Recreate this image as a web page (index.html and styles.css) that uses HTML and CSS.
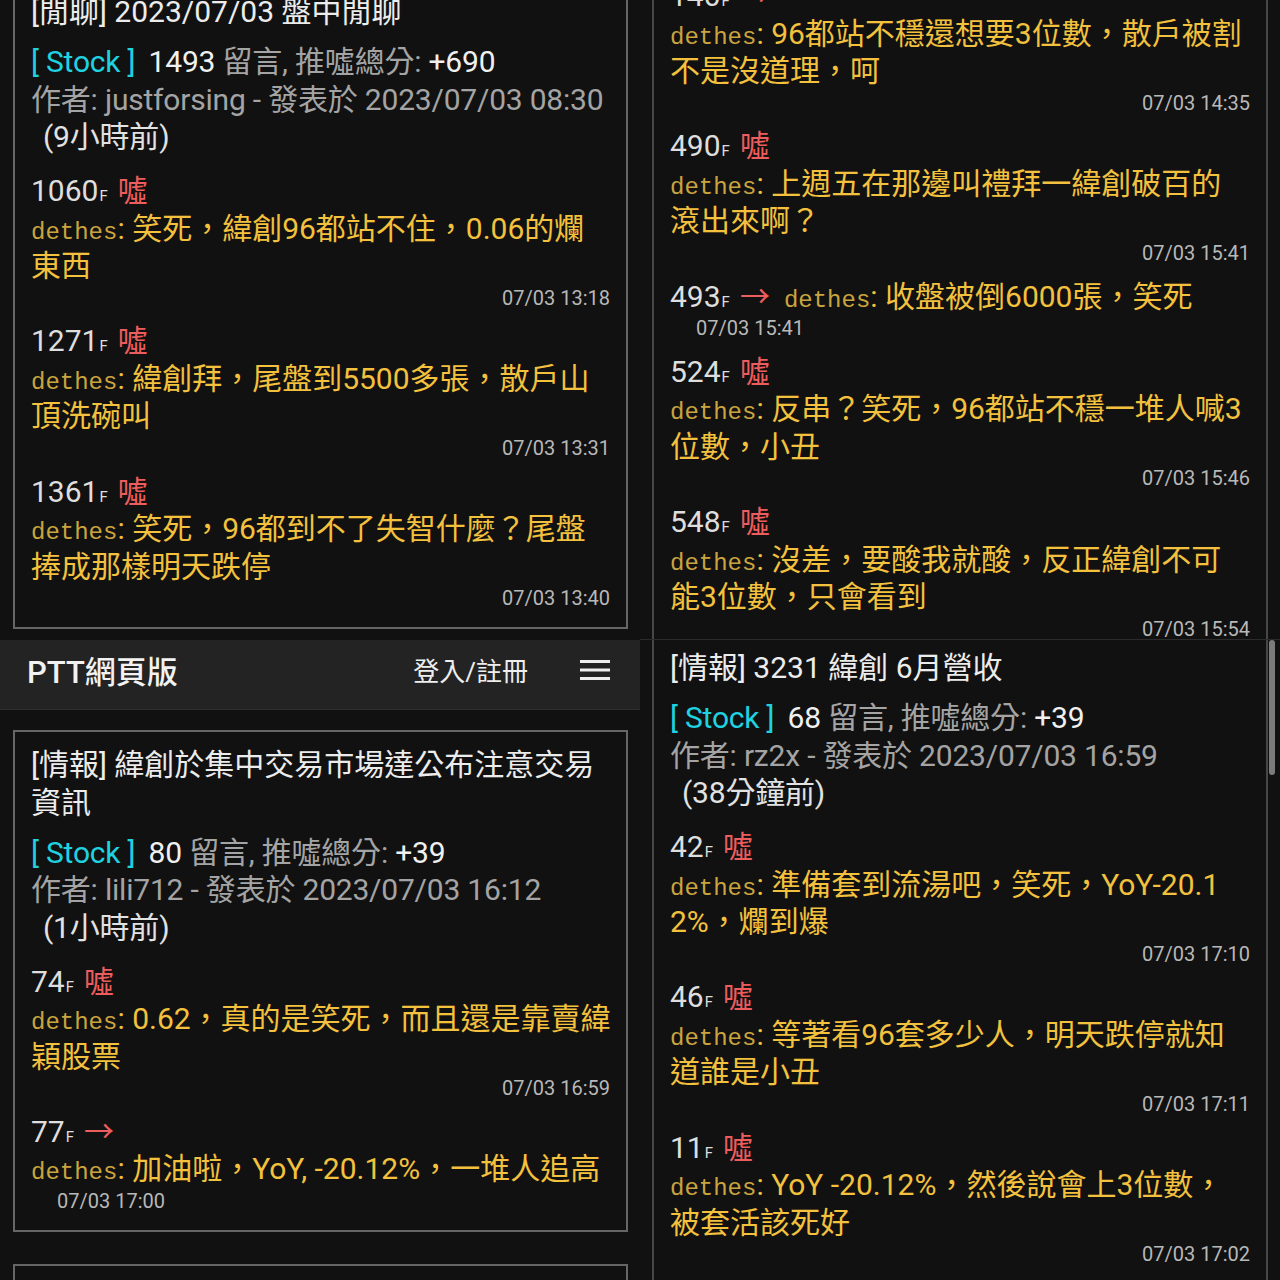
FILE: index.html
```html
<!DOCTYPE html>
<html lang="zh-Hant">

<head>
    <meta charset="UTF-8">
    <meta name="viewport" content="width=device-width, initial-scale=1.0">
    <title>PTT網頁版 - 緯創</title>
    <link rel="stylesheet" href="styles.css">
</head>

<body>
    <div class="screen">

        <!-- top left -->
        <section class="panel panel-tl">
            <article class="post post-first">
                <h2 class="post-title">[閒聊] 2023/07/03 盤中閒聊</h2>
                <div class="post-meta">
                    <div><span class="board">[ Stock ]</span> <span class="num">1493</span> 留言, 推噓總分: <span class="num">+690</span></div>
                    <div>作者: justforsing - 發表於 2023/07/03 08:30</div>
                    <div class="ago">(9小時前)</div>
                </div>
                <div class="comment">
                    <div class="floor">1060<small>F</small><span class="tag">噓</span></div>
                    <div class="cmt-text"><span class="uid">dethes</span>: 笑死，緯創96都站不住，0.06的爛<br>東西</div>
                    <div class="cmt-time">07/03 13:18</div>
                </div>
                <div class="comment">
                    <div class="floor">1271<small>F</small><span class="tag">噓</span></div>
                    <div class="cmt-text"><span class="uid">dethes</span>: 緯創拜，尾盤到5500多張，散戶山<br>頂洗碗叫</div>
                    <div class="cmt-time">07/03 13:31</div>
                </div>
                <div class="comment">
                    <div class="floor">1361<small>F</small><span class="tag">噓</span></div>
                    <div class="cmt-text"><span class="uid">dethes</span>: 笑死，96都到不了失智什麼？尾盤<br>捧成那樣明天跌停</div>
                    <div class="cmt-time">07/03 13:40</div>
                </div>
            </article>
        </section>

        <!-- top right -->
        <section class="panel panel-r panel-tr">
            <article class="post post-mid">
                <div class="comment">
                    <div class="floor">140<small>F</small><span class="tag">→</span></div>
                    <div class="cmt-text"><span class="uid">dethes</span>: 96都站不穩還想要3位數，散戶被割<br>不是沒道理，呵</div>
                    <div class="cmt-time">07/03 14:35</div>
                </div>
                <div class="comment">
                    <div class="floor">490<small>F</small><span class="tag">噓</span></div>
                    <div class="cmt-text"><span class="uid">dethes</span>: 上週五在那邊叫禮拜一緯創破百的<br>滾出來啊？</div>
                    <div class="cmt-time">07/03 15:41</div>
                </div>
                <div class="comment">
                    <div class="floor">493<small>F</small><span class="tag">→</span><span class="cmt-inline"><span class="uid">dethes</span>: 收盤被倒6000張，笑死</span></div>
                    <div class="cmt-time left">07/03 15:41</div>
                </div>
                <div class="comment">
                    <div class="floor">524<small>F</small><span class="tag">噓</span></div>
                    <div class="cmt-text"><span class="uid">dethes</span>: 反串？笑死，96都站不穩一堆人喊3<br>位數，小丑</div>
                    <div class="cmt-time">07/03 15:46</div>
                </div>
                <div class="comment">
                    <div class="floor">548<small>F</small><span class="tag">噓</span></div>
                    <div class="cmt-text"><span class="uid">dethes</span>: 沒差，要酸我就酸，反正緯創不可<br>能3位數，只會看到</div>
                    <div class="cmt-time">07/03 15:54</div>
                </div>
            </article>
        </section>

        <!-- bottom left -->
        <section class="panel panel-bl">
            <header class="topbar">
                <div class="brand">PTT網頁版</div>
                <div class="login">登入/註冊</div>
                <svg class="menu" width="30" height="20" viewBox="0 0 30 20">
                    <rect x="0" y="0" width="30" height="3" fill="#eee"/>
                    <rect x="0" y="8.5" width="30" height="3" fill="#eee"/>
                    <rect x="0" y="17" width="30" height="3" fill="#eee"/>
                </svg>
            </header>
            <article class="post">
                <h2 class="post-title">[情報] 緯創於集中交易市場達公布注意交易<br>資訊</h2>
                <div class="post-meta">
                    <div><span class="board">[ Stock ]</span> <span class="num">80</span> 留言, 推噓總分: <span class="num">+39</span></div>
                    <div>作者: lili712 - 發表於 2023/07/03 16:12</div>
                    <div class="ago">(1小時前)</div>
                </div>
                <div class="comment">
                    <div class="floor">74<small>F</small><span class="tag">噓</span></div>
                    <div class="cmt-text"><span class="uid">dethes</span>: 0.62，真的是笑死，而且還是靠賣緯<br>穎股票</div>
                    <div class="cmt-time">07/03 16:59</div>
                </div>
                <div class="comment">
                    <div class="floor">77<small>F</small><span class="tag">→</span></div>
                    <div class="cmt-text"><span class="uid">dethes</span>: 加油啦，YoY, -20.12%，一堆人追高</div>
                    <div class="cmt-time left">07/03 17:00</div>
                </div>
            </article>
            <article class="post post-next"></article>
        </section>

        <!-- bottom right -->
        <section class="panel panel-r panel-br">
            <div class="scrollbar"></div>
            <article class="post post-top">
                <h2 class="post-title">[情報] 3231 緯創 6月營收</h2>
                <div class="post-meta">
                    <div><span class="board">[ Stock ]</span> <span class="num">68</span> 留言, 推噓總分: <span class="num">+39</span></div>
                    <div>作者: rz2x - 發表於 2023/07/03 16:59</div>
                    <div class="ago">(38分鐘前)</div>
                </div>
                <div class="comment">
                    <div class="floor">42<small>F</small><span class="tag">噓</span></div>
                    <div class="cmt-text"><span class="uid">dethes</span>: 準備套到流湯吧，笑死，YoY-20.1<br>2%，爛到爆</div>
                    <div class="cmt-time">07/03 17:10</div>
                </div>
                <div class="comment">
                    <div class="floor">46<small>F</small><span class="tag">噓</span></div>
                    <div class="cmt-text"><span class="uid">dethes</span>: 等著看96套多少人，明天跌停就知<br>道誰是小丑</div>
                    <div class="cmt-time">07/03 17:11</div>
                </div>
                <div class="comment">
                    <div class="floor">11<small>F</small><span class="tag">噓</span></div>
                    <div class="cmt-text"><span class="uid">dethes</span>: YoY -20.12%，然後說會上3位數，<br>被套活該死好</div>
                    <div class="cmt-time">07/03 17:02</div>
                </div>
            </article>
        </section>

    </div>
</body>

</html>
```

FILE: styles.css
```css
* {
    box-sizing: border-box;
}

body {
    margin: 0;
    background-color: #111;
    font-family: Roboto, "Noto Sans CJK TC", sans-serif;
    color: #eee;
}

.screen {
    width: 1280px;
    height: 1280px;
    display: grid;
    grid-template-columns: 640px 640px;
    grid-template-rows: 640px 640px;
    overflow: hidden;
}

.panel {
    position: relative;
    overflow: hidden;
}

.panel-tr {
    border-bottom: 1px solid #2c2c2c;
}

/* article card */
.post {
    border: 2px solid #666;
    margin-left: 13px;
    margin-right: 12px;
    padding: 14px 16px 4px 16px;
    font-size: 30px;
    line-height: 37.5px;
}

.panel-r .post {
    border-color: #474747;
    margin-left: 12px;
}

.post-first {
    margin-top: -23px;
}

.post-mid {
    margin-top: -39px;
    min-height: 720px;
}

.post-top {
    margin-top: -7px;
    min-height: 700px;
}

.post-next {
    margin-top: 32px;
    height: 120px;
}

.post-title {
    margin: 0;
    font-size: 30px;
    font-weight: 400;
    line-height: 37.5px;
    color: #ececec;
}

.post-meta {
    margin: 12.5px 0 16.5px;
    color: #a4a4a4;
    white-space: nowrap;
    letter-spacing: -0.2px;
}

.board {
    color: #1fd2e0;
    margin-right: 6px;
}

.num {
    color: #f0f0f0;
}

.ago {
    color: #e2e2e2;
    padding-left: 12px;
}

/* comments */
.comment {
    margin-bottom: 10.75px;
}

.floor {
    color: #dedede;
    white-space: nowrap;
}

.floor small {
    font-size: 15px;
    line-height: 1;
    margin-left: 1px;
}

.tag {
    font-family: "Noto Sans CJK TC", sans-serif;
    line-height: 1;
    color: #ee5d5d;
    margin-left: 10px;
}

.cmt-text,
.cmt-inline {
    color: #f3c13d;
    white-space: nowrap;
}

.cmt-inline {
    margin-left: 14px;
}

.uid {
    font-family: "Liberation Mono", monospace;
    font-size: 24px;
    line-height: 1;
    color: #caa43e;
}

.cmt-time {
    font-size: 20px;
    line-height: 27px;
    color: #b8b8b8;
    text-align: right;
}

.cmt-time.left {
    text-align: left;
    padding-left: 26px;
}

/* header bar */
.topbar {
    height: 70px;
    background-color: #232323;
    border-bottom: 1px solid #2e2e2e;
    display: flex;
    align-items: center;
    padding: 0 30px 10px 27px;
    margin-bottom: 20px;
}

.brand {
    flex: 1;
    font-size: 31px;
    font-weight: 500;
    color: #f2f2f2;
}

.login {
    font-size: 26px;
    color: #eee;
    margin-right: 52px;
}

.menu {
    display: block;
}

.scrollbar {
    position: absolute;
    top: 0;
    right: 5px;
    width: 6px;
    height: 135px;
    background-color: #7b7b7b;
    border-radius: 3px;
}
```
